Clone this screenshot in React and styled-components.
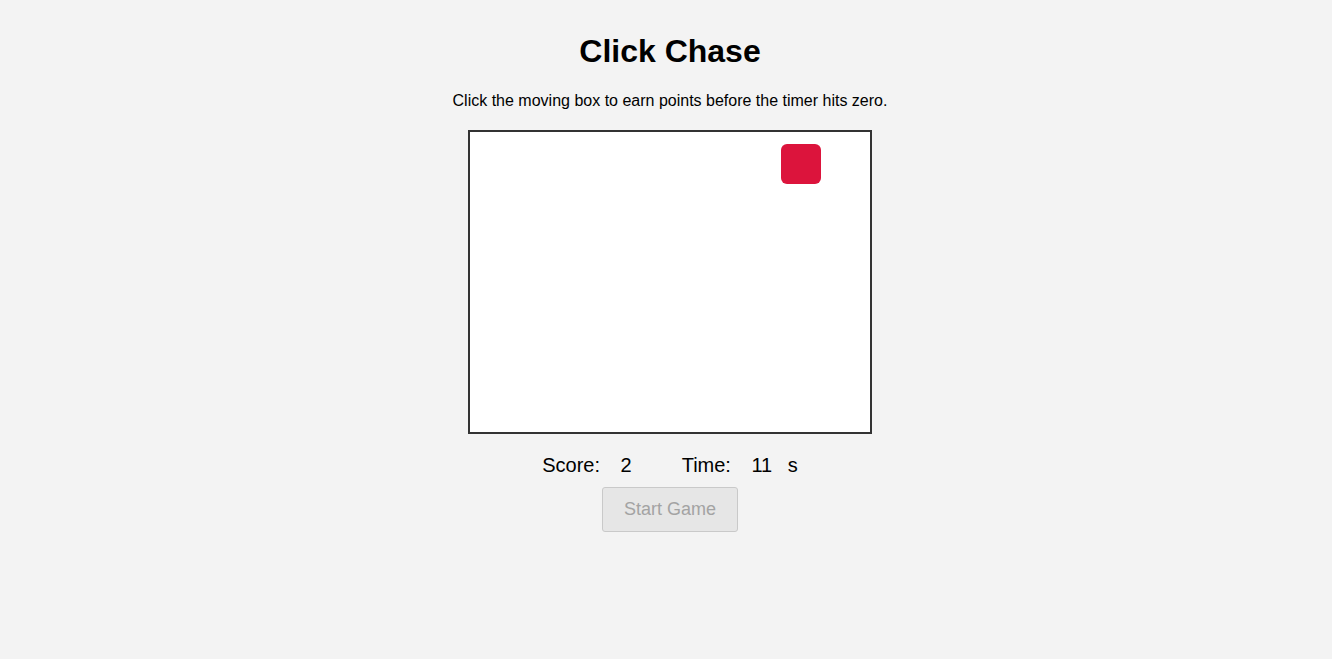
import React, { useState } from 'react'
import styled, { createGlobalStyle } from 'styled-components'

const GlobalStyle = createGlobalStyle`
    body {
        margin: 0;
        background: #f3f3f3;
        font-family: "Liberation Sans", Arial, sans-serif;
        color: #000;
    }
`;

function App() {
    const [score] = useState(2)
    const [time] = useState(11)
    const [target] = useState({ x: 311, y: 12 })

    return(
        <>
            <GlobalStyle />
            <PageStyled>
                <h1>Click Chase</h1>
                <p className='intro'>Click the moving box to earn points before the timer hits zero.</p>
                <GameArea>
                    <Target style={{ left: target.x, top: target.y }} />
                </GameArea>
                <Stats>
                    <Stat>Score: <Value>{score}</Value></Stat>
                    <Stat>Time: <Value>{time}</Value> s</Stat>
                </Stats>
                <StartButton disabled>Start Game</StartButton>
            </PageStyled>
        </>
    )
}

const PageStyled = styled.div`
    display: flex;
    flex-direction: column;
    align-items: center;
    padding: 33px 0 40px 8px;
    h1 {
        margin: 0 0 22px;
        font-size: 32px;
        font-weight: bold;
    }
    .intro {
        margin: 0 0 20px;
        font-size: 16px;
    }
`;

const GameArea = styled.div`
    position: relative;
    width: 400px;
    height: 300px;
    background: #fff;
    border: 2px solid #333;
`;

const Target = styled.div`
    position: absolute;
    width: 40px;
    height: 40px;
    border-radius: 6px;
    background: #dc143c;
    cursor: pointer;
`;

const Stats = styled.div`
    display: flex;
    justify-content: center;
    gap: 40px;
    margin-top: 20px;
    font-size: 20px;
`;

const Stat = styled.div`
    white-space: pre;
`;

const Value = styled.span`
    margin: 0 10px 0 15px;
`;

const StartButton = styled.button`
    margin-top: 10px;
    width: 136px;
    height: 45px;
    font-family: "Liberation Sans", Arial, sans-serif;
    font-size: 18px;
    color: #a3a3a3;
    background: #e6e6e6;
    border: 1px solid #c9c9c9;
    border-radius: 3px;
    cursor: default;
`;

export default App
